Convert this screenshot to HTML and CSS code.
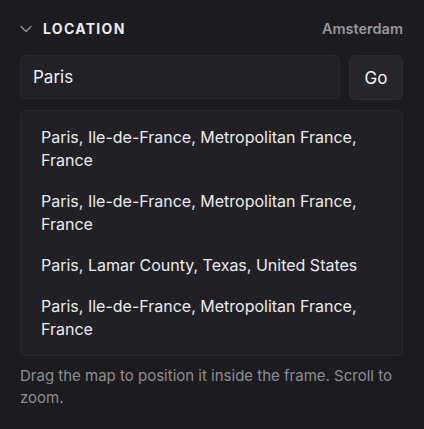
FILE: index.html
```html
<!DOCTYPE html>
<html lang="en">
<head>
    <meta charset="UTF-8">
    <meta name="viewport" content="width=device-width, initial-scale=1.0">
    <title>Location</title>
    <link rel="stylesheet" href="styles.css">
</head>
<body>
    <div class="panel">
        <div class="panel-head">
            <div class="panel-title">
                <svg class="caret" width="12" height="8" viewBox="0 0 12 8">
                    <path d="M1 1.5 L6 6.5 L11 1.5" fill="none" stroke="#8f8e93" stroke-width="1.4" stroke-linecap="round" stroke-linejoin="round"/>
                </svg>
                <span>LOCATION</span>
            </div>
            <span class="panel-value">Amsterdam</span>
        </div>

        <div class="search">
            <input class="search-input" type="text" value="Paris">
            <button class="search-btn">Go</button>
        </div>

        <ul class="results">
            <li>Paris, Ile-de-France, Metropolitan France, France</li>
            <li>Paris, Ile-de-France, Metropolitan France, France</li>
            <li>Paris, Lamar County, Texas, United States</li>
            <li>Paris, Ile-de-France, Metropolitan France, France</li>
        </ul>

        <p class="hint">Drag the map to position it inside the frame. Scroll to zoom.</p>
    </div>
</body>
</html>
```

FILE: styles.css
```css
*{
    margin: 0;
    padding: 0;
    list-style: none;
    box-sizing: border-box;
}
body{
    background-color: #1c1b1f;
    font-family: Inter, "Noto Sans", sans-serif;
    color: #ecebef;
}
.panel{
    padding: 17px 21px 0 20px;
}
.panel-head{
    display: flex;
    justify-content: space-between;
    align-items: center;
    height: 22px;
}
.panel-title{
    display: flex;
    align-items: center;
    gap: 11px;
    font-size: 14px;
    font-weight: 700;
    letter-spacing: 1.3px;
    color: #ecebef;
}
.caret{
    margin-top: 2px;
}
.panel-value{
    font-size: 14.5px;
    font-weight: 600;
    color: #96959a;
}
.search{
    display: flex;
    gap: 9px;
    margin-top: 16px;
}
.search-input{
    flex: 1;
    height: 44px;
    padding: 0 12px;
    background-color: #222126;
    border: 1px solid #29282d;
    border-radius: 6px;
    font-family: inherit;
    font-size: 17px;
    color: #f2f1f5;
    outline: none;
}
.search-btn{
    width: 54px;
    height: 45px;
    background-color: #26252a;
    border: 1px solid #2c2b30;
    border-radius: 6px;
    font-family: inherit;
    font-size: 17px;
    color: #f2f1f5;
}
.results{
    margin-top: 10px;
    padding: 6px 0 5px;
    background-color: #212025;
    border: 1px solid #29282d;
    border-radius: 6px;
}
.results li{
    padding: 9px 20px;
    font-size: 16px;
    line-height: 23px;
    color: #ecebef;
}
.hint{
    margin-top: 9px;
    font-size: 15px;
    line-height: 22px;
    color: #8e8d92;
}
```
